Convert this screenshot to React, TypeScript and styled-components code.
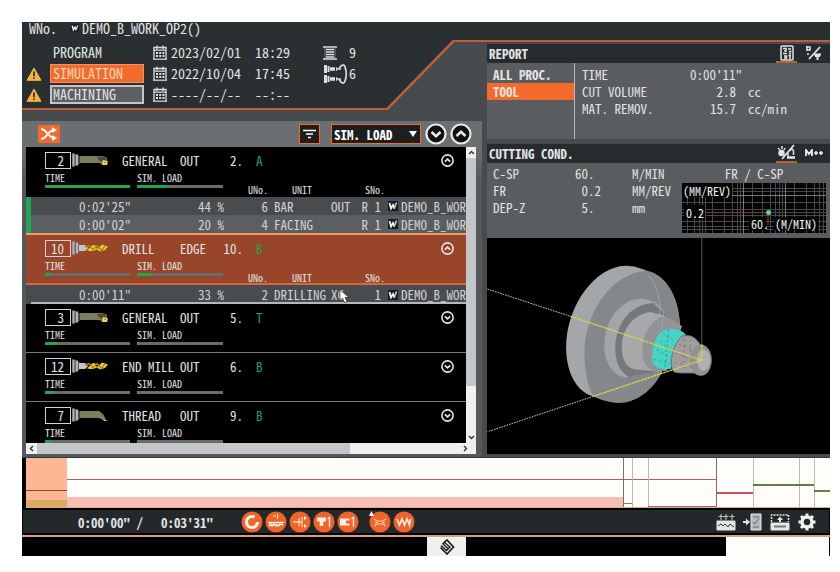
import React from "react";
import styled, { createGlobalStyle, css } from "styled-components";

const c = {
  orange: "#f26b2c",
  line: "#bf5c3a",
  dark: "#2a2f32",
  frame: "#474b4e",
  body: "#595d60",
  text: "#e2e3e3",
  green: "#22a455",
};

const Global = createGlobalStyle`
  * { box-sizing: border-box; }
  body { margin: 0; background: #fff; }
  body, button, select, input {
    font-family: "Noto Sans Mono CJK JP", "Liberation Mono", "Noto Sans CJK JP", monospace;
  }
  button { border: 0; padding: 0; background: none; color: inherit; }
  svg { display: block; }
`;

const Shell = styled.main`
  display: flex;
  flex-direction: column;
  height: calc(100vh - 38px);
  min-height: 534px;
  margin: 22px 10px 16px 22px;
  background: ${c.frame};
  color: ${c.text};
  font-size: 13px;
  line-height: 17px;
  white-space: pre;
`;

const Upper = styled.div`
  position: relative;
  flex: 1;
  min-height: 0;
  display: grid;
  grid-template-columns: 465fr 343fr;
  grid-template-rows: minmax(0, 1fr);
  isolation: isolate;
`;

const HeaderShape = styled.div<{ $edge?: boolean }>`
  position: absolute;
  z-index: -1;
  inset: 0 0 auto 0;
  height: ${(p) => (p.$edge ? 88 : 86)}px;
  background: ${(p) => (p.$edge ? c.line : c.dark)};
  clip-path: ${(p) =>
    p.$edge
      ? "polygon(0 0, 100% 0, 100% 20px, 53.5% 20px, 45.3% 88px, 0 88px)"
      : "polygon(0 0, 100% 0, 100% 18px, 53.3% 18px, 45.1% 86px, 0 86px)"};
`;

const Left = styled.section`
  display: flex;
  flex-direction: column;
  min-width: 0;
  min-height: 0;
`;

const Head = styled.header`
  display: flex;
  flex-direction: column;
  height: 99px;
  font-size: 14px;
`;

const Title = styled.h1`
  display: flex;
  align-items: center;
  gap: 14px;
  height: 11px;
  margin: 0;
  padding-left: 7px;
  font: inherit;
  line-height: 14px;
`;
const FileName = styled.span`
  display: flex;
  align-items: center;
  gap: 3px;
`;

const Stages = styled.div`
  display: grid;
  grid-template-columns: 24px 94px 9px 18px 84px 68px 26px 20px;
  grid-auto-rows: 21px;
  align-items: center;
  padding: 9px 0 0 4px;
`;

const Stage = styled.button<{ $tone?: "active" | "idle" }>`
  height: 19px;
  padding: 0 2px;
  text-align: left;
  font-size: 14px;
  line-height: 17px;
  border: 1px solid transparent;
  ${(p) => p.$tone === "active" && css`background: ${c.orange}; border-color: #f7925f; color: #ffd9b8;`}
  ${(p) => p.$tone === "idle" && css`background: #5b5f62; border-color: #c4c6c7; border-width: 2px; line-height: 15px; padding-left: 1px;`}
`;

const ListPanel = styled.div`
  flex: 1;
  min-height: 0;
  display: flex;
  flex-direction: column;
  margin-right: 5px;
  padding: 0 6px 3px 4px;
  background: linear-gradient(#6b6f72 0 26px, #54585b 60px);
`;

const Toolbar = styled.div`
  flex: none;
  display: flex;
  align-items: center;
  height: 26px;
  padding: 0 4px 0 12px;
`;
const Shuffle = styled.button`
  display: grid;
  place-items: center;
  width: 22px;
  height: 18px;
  margin-right: auto;
  background: ${c.orange};
`;
const FilterButton = styled.button`
  display: grid;
  place-items: center;
  width: 21px;
  height: 20px;
  margin-right: 11px;
  border: 1px solid ${c.orange};
  background: #1c1e1f;
`;
const SelectWrap = styled.label`
  position: relative;
  width: 90px;
  height: 20px;
  margin-right: 1px;
  svg { position: absolute; right: 4px; top: 7px; pointer-events: none; }
`;
const Select = styled.select`
  appearance: none;
  width: 100%;
  height: 100%;
  padding: 0 0 0 2px;
  border: 1px solid ${c.orange};
  border-radius: 0;
  background: #1c1e1f;
  color: #fff;
  font-size: 13px;
  font-weight: 700;
  line-height: 17px;
`;
const Round = styled.button`
  width: 22px;
  height: 22px;
  margin-left: 3px;
`;

const ScrollArea = styled.div`
  flex: 1;
  min-height: 0;
  display: grid;
  grid-template-columns: minmax(0, 1fr) 10px;
  grid-template-rows: minmax(0, 1fr) 11px;
`;

const List = styled.div`
  overflow: hidden;
  background: #000;
`;

const Group = styled.article<{ $selected?: boolean; $open?: boolean }>`
  display: grid;
  grid-template-columns: 85px 7px 86px 1fr;
  grid-template-rows: 22px 13px 1fr;
  height: ${(p) => (p.$selected ? 52 : p.$open ? 50 : 49)}px;
  padding: 2px 12px 0 19px;
  background: #000;
  border-bottom: ${(p) => (p.$open ? 0 : 1)}px solid #77797a;
  ${(p) => p.$selected && css`
    background: #98452a;
    border-top: 2px solid #f19a6c;
    border-bottom: 2px solid #cf6a45;
  `}
`;

const GroupHead = styled.div`
  grid-column: 1 / -1;
  display: grid;
  grid-template-columns: 26px 51px 58px 43px 20px 13px 20px 1fr 13px;
  align-items: center;
`;
const ToolNo = styled.span`
  height: 17px;
  padding-right: 6px;
  border: 1px solid #d3d4d4;
  text-align: right;
  line-height: 15px;
`;
const Turret = styled.span`
  grid-column: 7;
  color: ${c.green};
`;
const Toggle = styled.button`
  grid-column: 9;
  width: 13px;
  height: 13px;
`;
const Small = styled.span<{ $col: number }>`
  grid-column: ${(p) => p.$col};
  font-size: 10px;
  line-height: 13px;
`;
const Meter = styled.div<{ $col: number }>`
  grid-column: ${(p) => p.$col};
  grid-row: 3;
  height: 3px;
  margin-top: 1px;
  background: #6a6c6c;
`;
const Fill = styled.div`
  height: 100%;
  background: ${c.green};
`;
const Captions = styled.div`
  grid-column: 4;
  grid-row: 3;
  display: grid;
  grid-template-columns: 44px 73px 1fr;
  padding-left: 25px;
  font-size: 10px;
  line-height: 11px;
`;

const Unit = styled.div<{ $alt?: boolean; $marked?: boolean; $last?: boolean }>`
  position: relative;
  display: grid;
  grid-template-columns: 100px 93px 44px 6px 57px 25px 25px 7px 1fr;
  align-items: center;
  height: ${(p) => (p.$last ? 19 : 18)}px;
  border-left: 5px solid ${(p) => (p.$marked ? c.green : "transparent")};
  background: ${(p) => (p.$alt ? "#5b5f62" : "#484c4f")};
  box-shadow: ${(p) => (p.$last ? "inset 0 -2px #b5b7b8" : "none")};
  color: #d0d2d3;
`;
const Num = styled.span`
  text-align: right;
`;
const Pointer = styled.svg`
  position: absolute;
  left: 308px;
  top: 5px;
`;

const VScroll = styled.div`
  display: grid;
  grid-template-rows: 11px 231fr 46fr 11px;
  background: #efefef;
`;
const HScroll = styled.div`
  grid-column: 1 / -1;
  display: grid;
  grid-template-columns: 11px 314fr 104fr 22px;
  background: #efefef;
`;
const Thumb = styled.div`
  background: #c3c7c9;
`;
const Step = styled.button`
  display: grid;
  place-items: center;
`;

const Right = styled.section`
  display: flex;
  flex-direction: column;
  min-width: 0;
  min-height: 0;
  padding: 22px 0 3px;
`;
const PanelHead = styled.header`
  flex: none;
  display: flex;
  align-items: center;
  height: 19px;
  padding-left: 2px;
  background: #262b2e;
  h2 { flex: 1; margin: 0; font-size: 13px; line-height: 17px; }
`;
const Tab = styled.button<{ $active?: boolean }>`
  display: grid;
  place-items: center;
  width: 21px;
  height: 19px;
  margin-right: 6px;
  border-bottom: 2px solid ${(p) => (p.$active ? c.line : "transparent")};
`;
const Report = styled.div`
  flex: none;
  display: grid;
  grid-template-columns: 88px 1fr;
  height: 76px;
  margin-bottom: 5px;
  background: ${c.body};
`;
const Scope = styled.nav`
  display: flex;
  flex-direction: column;
  padding-top: 3px;
  border-right: 1px solid #b9bbbc;
`;
const ScopeButton = styled.button<{ $active?: boolean }>`
  height: 17px;
  padding-left: 6px;
  text-align: left;
  font-size: 13px;
  font-weight: 700;
  line-height: 17px;
  background: ${(p) => (p.$active ? c.orange : "transparent")};
`;
const Data = styled.table<{ $cols: number[] }>`
  border-collapse: collapse;
  table-layout: fixed;
  align-self: start;
  margin-top: 2px;
  width: ${(p) => p.$cols.reduce((a, b) => a + b, 0)}px;
  td, th { height: 17px; padding: 0; font-weight: 400; text-align: left; }
  ${(p) => p.$cols.map((w, i) => `tr > :nth-child(${i + 1}) { width: ${w}px; }`).join("")}
`;
const ReportData = styled(Data)`
  margin: 3px 0 0 7px;
  td:nth-child(2) { text-align: right; }
  tr + tr td:nth-child(2) { padding-right: 6px; }
  td:nth-child(3) { padding-left: 6px; }
`;
const Cutting = styled.div`
  flex: none;
  display: flex;
  justify-content: space-between;
  height: 75px;
  padding: 0 4px 0 6px;
  background: ${c.body};
`;
const Graph = styled.figure`
  display: flex;
  flex-direction: column;
  width: 144px;
  margin: 2px 0 0;
  figcaption { height: 18px; text-align: center; }
`;
const Plot = styled.div`
  position: relative;
  height: 50px;
  background: #050505;
  svg { position: absolute; inset: 0; }
`;
const PlotLabel = styled.span<{ $x: number; $y: number }>`
  position: absolute;
  left: ${(p) => p.$x}px;
  top: ${(p) => p.$y}px;
  color: #f2f2f2;
  font-size: 12px;
  line-height: 15px;
`;
const Viewer = styled.div`
  flex: 1;
  min-height: 0;
  background: #000;
  svg { width: 100%; height: 100%; }
`;

const Timeline = styled.div`
  flex: none;
  height: 51px;
  padding-left: 4px;
  background: #000;
  border-top: 1px solid #33383b;
  svg { width: 100%; height: 50px; background: #fefdf9; }
`;
const Status = styled.footer`
  flex: none;
  display: flex;
  align-items: center;
  height: 27px;
  padding: 0 12px 0 55px;
  background: #23282b;
  border: solid #000;
  border-width: 2px 1px 1px;
  box-shadow: inset 0 -1px #000;
  font-weight: 700;
`;
const Clock = styled.span`
  display: flex;
  width: 163px;
`;
const Elapsed = styled.span`
  width: 83px;
`;
const Badge = styled.button<{ $gap?: boolean }>`
  width: 22px;
  height: 22px;
  margin-left: ${(p) => (p.$gap ? 8 : 0)}px;
  margin-right: 2px;
`;
const Tools = styled.div`
  display: flex;
  gap: 7px;
  margin-left: auto;
  button { width: 20px; height: 20px; }
`;
const Bottom = styled.div`
  flex: none;
  display: grid;
  grid-template-columns: 405fr 39px 260fr 103fr 1px;
  height: 21px;
  border-top: 2px solid #e29a84;
  background: #000;
`;
const Reset = styled.button`
  display: grid;
  place-items: center;
  background: #efefef;
`;
const Blank = styled.div`
  grid-column: 4;
  background: #fefdf9;
`;

const Warn = () => (
  <svg width="16" height="14" viewBox="0 0 16 14" aria-hidden="true">
    <path d="M8 1L15 13.3H1Z" fill="#f0b63c" stroke="#f0b63c" strokeLinejoin="round" />
    <path d="M8 4.5V9.2M8 10.4V12" stroke="#2b2513" strokeWidth="1.7" />
  </svg>
);
const Calendar = () => (
  <svg width="14" height="15" viewBox="0 0 14 15" fill="none" stroke="#dddfdf" aria-hidden="true">
    <path d="M1 14V2.5H13V14M1 5.2H13M4 .5V4M10 .5V4" strokeWidth="1.3" />
    <path d="M0 14.200H14" strokeWidth="1.2" />
    <path d="M3 8H11.5M3 11H11.5" strokeWidth="2" strokeDasharray="2 1.2" />
  </svg>
);
const ProgramIcon = () => (
  <svg width="14" height="14" viewBox="0 0 14 14" stroke="#dddfdf" aria-hidden="true">
    <path d="M0 1H14M0 13H14M3 3.500H11M3 6H11M3 8.500H11M3 11H11" strokeWidth="1.500" />
    <path d="M2 1V13M12 1V13" strokeWidth=".6" opacity=".7" />
  </svg>
);
const ToolsIcon = () => (
  <svg width="25" height="20" viewBox="0 0 25 20" fill="none" stroke="#dddfdf" aria-hidden="true">
    <path d="M2.500 1V9M2.500 11V19" strokeWidth="3" />
    <path d="M5.500 2V8M5.500 12V18" strokeWidth="2" />
    <path d="M7 5H14M7 15H14" strokeWidth="3.500" strokeDasharray="5 1" />
    <path d="M14 5H18M14 15H18" strokeWidth="1.500" />
    <path d="M16 4.500L18.500 1.500Q21 0 22 3Q24.500 10 22 17Q21 20 18.500 18.500L16 15.500" strokeWidth="1.700" />
  </svg>
);
const FileMark = ({ size = 10 }: { size?: number }) => (
  <svg width={size} height={size} viewBox="0 0 10 10" aria-hidden="true">
    <path d="M0 0H10V10H0Z" fill="#0f1c33" />
    <path d="M1.500 2L3 7.500L5 4L6.500 7.500" stroke="#f4f4ef" strokeWidth="1.800" fill="none" />
    <path d="M6 8L8.500 1.500" stroke="#d8d36a" strokeWidth="1.700" />
  </svg>
);
const Chevron = ({ up, heavy }: { up?: boolean; heavy?: boolean }) => (
  <svg width="100%" height="100%" viewBox="0 0 22 22" fill="none" stroke="#e9e9e9" aria-hidden="true">
    <circle cx="11" cy="11" r="9.500" strokeWidth={heavy ? 2.2 : 2.6} fill={heavy ? "#111" : "none"} />
    <path d={up ? "M6.500 13L11 8.800L15.500 13" : "M6.500 9L11 13.200L15.500 9"} strokeWidth={heavy ? 2.6 : 3} />
  </svg>
);
const Arrow = ({ d }: { d: string }) => (
  <svg width="7" height="7" viewBox="0 0 7 7" fill="none" stroke="#333" strokeWidth="1.4" aria-hidden="true"><path d={d} /></svg>
);

const ToolArt = ({ kind }: { kind: string }) => (
  <svg width="38" height="16" viewBox="0 0 38 16" aria-hidden="true">
    <path d="M2.500 1.500V14.500M6 2.500V13.500" stroke="#b3b6b9" strokeWidth="2.400" />
    <path d="M4.300 2V14M8 4V12" stroke="#6d7174" strokeWidth="1.200" />
    {kind === "turn" && (
      <g>
        <path d="M9 4H32L36 6V9L34 12H31L28 11H9Z" fill="#7d7b60" />
        <path d="M26 5L33 4.500L36 8L29 9.500Z" fill="#4b493a" />
        <path d="M32 8L37 9.500L36 13H31Z" fill="#e8dc48" />
        <path d="M33.500 10.500H35" stroke="#6d681f" />
      </g>
    )}
    {kind === "drill" && (
      <g>
        <path d="M8 5H14L17 8L14 11H8Z" fill="#c4c7ca" />
        <path d="M13 8L16 10.500L21 5.500L24 5L26 9L31 4.500L37 6.500L34 10L29 11.500L26 9.500L22 11L18 11Z" fill="#e8cb32" />
        <path d="M14 7L18 5.500L22 10L26 5.500L31 10.500L34 5.500" stroke="#a98518" strokeWidth="1.400" fill="none" />
      </g>
    )}
    {kind === "thread" && (
      <g>
        <path d="M9 4H28L32 7L35 12.500L32 13L28 11H9Z" fill="#7d7b60" />
        <path d="M32 12L37 14H33Z" fill="#c5c5b7" />
      </g>
    )}
  </svg>
);

type UnitData = { time: string; load: string; no: string; name: string; part: string; sno: string; marked?: boolean; cursor?: boolean };
type GroupData = { no: number; art: string; name: string; part: string; seq: string; turret: string; time: number; load: number; units?: UnitData[]; selected?: boolean };

const groups: GroupData[] = [
  { no: 2, art: "turn", name: "GENERAL", part: "OUT", seq: "2.", turret: "A", time: 100, load: 35, units: [
    { time: "0:02'25\"", load: "44 %", no: "6", name: "BAR", part: "OUT", sno: "R 1", marked: true },
    { time: "0:00'02\"", load: "20 %", no: "4", name: "FACING", part: "", sno: "R 1", marked: true },
  ] },
  { no: 10, art: "drill", name: "DRILL", part: "EDGE", seq: "10.", turret: "B", time: 7, load: 17, selected: true, units: [
    { time: "0:00'11\"", load: "33 %", no: "2", name: "DRILLING", part: "XC", sno: "1", cursor: true },
  ] },
  { no: 3, art: "turn", name: "GENERAL", part: "OUT", seq: "5.", turret: "T", time: 14, load: 2 },
  { no: 12, art: "drill", name: "END MILL", part: "OUT", seq: "6.", turret: "B", time: 11, load: 2 },
  { no: 7, art: "thread", name: "THREAD", part: "OUT", seq: "9.", turret: "B", time: 7, load: 1 },
];

const stages: { label: string; tone?: "active" | "idle"; date: string; time: string; icon?: React.ReactNode; count: string }[] = [
  { label: "PROGRAM", date: "2023/02/01", time: "18:29", icon: <ProgramIcon />, count: "9" },
  { label: "SIMULATION", tone: "active", date: "2022/10/04", time: "17:45", icon: <ToolsIcon />, count: "6" },
  { label: "MACHINING", tone: "idle", date: "----/--/--", time: "--:--", count: "" },
];

const ToolGroup = ({ g }: { g: GroupData }) => (
  <>
    <Group $selected={g.selected} $open={!!g.units}>
      <GroupHead>
        <ToolNo>{g.no}</ToolNo>
        <ToolArt kind={g.art} />
        <span>{g.name}</span>
        <span>{g.part}</span>
        <Num>{g.seq}</Num>
        <Turret>{g.turret}</Turret>
        <Toggle aria-label={g.units ? "Collapse" : "Expand"}><Chevron up={!!g.units} /></Toggle>
      </GroupHead>
      <Small $col={1}>TIME</Small>
      <Small $col={3}>SIM. LOAD</Small>
      <Meter $col={1}><Fill style={{ width: `${g.time}%` }} /></Meter>
      <Meter $col={3}><Fill style={{ width: `${g.load}%` }} /></Meter>
      {g.units && <Captions><span>UNo.</span><span>UNIT</span><span>SNo.</span></Captions>}
    </Group>
    {g.units?.map((u, i) => (
      <Unit key={u.time} $alt={i % 2 === 1} $marked={u.marked} $last={g.selected}>
        <Num>{u.time}</Num>
        <Num>{u.load}</Num>
        <Num>{u.no}</Num>
        <span />
        <span>{u.name}</span>
        <span>{u.part}</span>
        <Num>{u.sno}</Num>
        <span />
        <FileName><FileMark />DEMO_B_WOR</FileName>
        {u.cursor && (
          <Pointer width="11" height="14" viewBox="0 0 11 14" aria-hidden="true">
            <path d="M1 0V10L3.500 8L5.500 12.500L8 11.500L6 7.500L9.500 7Z" fill="#fff" stroke="#222" strokeWidth=".6" />
          </Pointer>
        )}
      </Unit>
    ))}
  </>
);

const ReportIcon = () => (
  <svg width="14" height="16" viewBox="0 0 14 16" fill="none" stroke="#e4e4e4" strokeWidth="1.5" aria-hidden="true">
    <rect x="1" y="1" width="12" height="14" rx="1" />
    <path d="M3 3.500H6V6H4M8 4H11M9 6.500H11.500M3 8.500H7M9 8.500H11M4 11H6.500V13H4M8.500 10.500H11M10 11V14" />
  </svg>
);
const SplitIcon = () => (
  <svg width="17" height="16" viewBox="0 0 17 16" fill="none" stroke="#e4e4e4" strokeWidth="1.5" aria-hidden="true">
    <path d="M2 1V6M1 2H5V5H2M3 8V10" />
    <path d="M4 14L15 2" strokeWidth="1.800" />
    <path d="M9 9.500H16M10 11H15M12.500 11V15" strokeWidth="2" />
  </svg>
);
const CutIcon = () => (
  <svg width="19" height="17" viewBox="0 0 19 17" fill="none" stroke="#e4e4e4" strokeWidth="1.5" aria-hidden="true">
    <path d="M5 15L17 1" strokeWidth="1.800" />
    <circle cx="4.500" cy="9" r="2.500" fill="#e4e4e4" />
    <path d="M1 4L3 6M5 2V5M8 4L7 6M13 7Q15 3 16.500 7V11M11 9V13" />
    <path d="M10 13.500H18" strokeWidth="2.500" />
  </svg>
);
const MacroIcon = () => (
  <svg width="18" height="8" viewBox="0 0 18 8" fill="none" stroke="#f0f0f0" strokeWidth="1.800" aria-hidden="true">
    <path d="M1 7V1L4 5L7 1V7" />
    <path d="M9 4H13M11 2V6M14 4H18M16 2V6" strokeWidth="1.500" />
  </svg>
);

const gridX = [5, 12, 17, 20, 23, 30, 42, 50, 55, 58, 61, 70, 80, 88, 93, 97, 100, 103, 112, 124, 132, 137, 141];
const gridY = [5, 8, 12, 19, 26, 29, 32, 38, 43, 46];

const badges = [
  <g key="0"><circle cx="11" cy="11" r="5.500" strokeWidth="3.200" strokeDasharray="28 6" /><path d="M6.500 9L10 4.500" strokeWidth="1" /></g>,
  <g key="1"><path d="M8 5H11M12.500 3V8" strokeWidth="1.200" opacity=".8" /><path d="M3 11.500H19" strokeWidth="1.400" /><path d="M4 15L5.500 13L7 15L9 13L11 15L12.500 13M13 15.500L15 13L18 14" strokeWidth="1.700" /></g>,
  <g key="2"><path d="M4 11H10M10 7V15M13 6V16M10 11H13" strokeWidth="1.300" opacity=".8" /><path d="M15 5L18 7L15 9ZM15 13L18 15L15 17Z" fill="#fff0e6" stroke="none" /></g>,
  <g key="3"><path d="M4 8.500H13" strokeWidth="4" /><path d="M8.500 10V15" strokeWidth="3.500" /><path d="M14.500 8L16.500 6.500V16" strokeWidth="1.400" /></g>,
  <g key="4"><path d="M3 11H9" strokeWidth="7" /><path d="M9 8.500H12.500M9 13.500H12.500" strokeWidth="2" /><path d="M14.500 8L16.500 6.500V16" strokeWidth="1.400" /></g>,
  <g key="5" strokeWidth="1.200" opacity=".75"><path d="M5 8L8 10H14L17 8M5 15L8 13H14L17 15M6 11.500H9M13 11.500H16" /></g>,
  <g key="6"><path d="M4 8L6.500 14L9 8L11.500 14L14 8L16.500 14L17.500 8" strokeWidth="1.700" /></g>,
];
const badgeLabels = ["Spindle", "Coolant", "Chuck", "Upper turret", "Lower turret", "Warm-up", "Vibration"];

export default function App() {
  return (
    <>
      <Global />
      <Shell>
        <Upper>
          <HeaderShape $edge />
          <HeaderShape />
          <Left>
            <Head>
              <Title><span>WNo.</span><FileName><FileMark size={8} />DEMO_B_WORK_OP2()</FileName></Title>
              <Stages>
                {stages.map((s) => (
                  <React.Fragment key={s.label}>
                    {s.tone ? <Warn /> : <span />}
                    <Stage $tone={s.tone}>{s.label}</Stage>
                    <span />
                    <Calendar />
                    <span>{s.date}</span>
                    <span>{s.time}</span>
                    {s.icon ?? <span />}
                    <span>{s.count}</span>
                  </React.Fragment>
                ))}
              </Stages>
            </Head>
            <ListPanel>
              <Toolbar>
                <Shuffle aria-label="Shuffle">
                  <svg width="18" height="14" viewBox="0 0 18 14" fill="none" stroke="#fff" strokeWidth="2" aria-hidden="true">
                    <path d="M1 2C7 2 8 11 14 11M1 12C7 12 8 3 14 3" />
                    <path d="M12 0L17 3L12 6ZM12 8L17 11L12 14Z" fill="#fff" stroke="none" />
                  </svg>
                </Shuffle>
                <FilterButton aria-label="Filter">
                  <svg width="13" height="10" viewBox="0 0 13 10" stroke="#fff" strokeWidth="1.600" aria-hidden="true">
                    <path d="M0 1.500H13M3 5H10M5 8.500H8" />
                  </svg>
                </FilterButton>
                <SelectWrap>
                  <Select aria-label="List value"><option>SIM. LOAD</option></Select>
                  <svg width="8" height="6" viewBox="0 0 8 6" aria-hidden="true"><path d="M0 0H8L4 6Z" fill="#fff" /></svg>
                </SelectWrap>
                <Round aria-label="Next"><Chevron heavy /></Round>
                <Round aria-label="Previous"><Chevron heavy up /></Round>
              </Toolbar>
              <ScrollArea>
                <List>{groups.map((g) => <ToolGroup key={g.no} g={g} />)}</List>
                <VScroll>
                  <Step aria-label="Scroll up"><Arrow d="M1 5L3.500 2.500L6 5" /></Step>
                  <Thumb />
                  <span />
                  <Step aria-label="Scroll down"><Arrow d="M1 2L3.500 4.500L6 2" /></Step>
                </VScroll>
                <HScroll>
                  <Step aria-label="Scroll left"><Arrow d="M5 1L2.500 3.500L5 6" /></Step>
                  <Thumb />
                  <span />
                  <Step aria-label="Scroll right"><Arrow d="M2 1L4.500 3.500L2 6" /></Step>
                </HScroll>
              </ScrollArea>
            </ListPanel>
          </Left>

          <Right>
            <PanelHead>
              <h2>REPORT</h2>
              <Tab $active aria-label="Report"><ReportIcon /></Tab>
              <Tab aria-label="Tool split"><SplitIcon /></Tab>
            </PanelHead>
            <Report>
              <Scope>
                <ScopeButton>ALL PROC.</ScopeButton>
                <ScopeButton $active>TOOL</ScopeButton>
              </Scope>
              <ReportData $cols={[100, 60, 90]}>
                <tbody>
                  <tr><th scope="row">TIME</th><td>0:00'11"</td><td /></tr>
                  <tr><th scope="row">CUT VOLUME</th><td>2.8</td><td>cc</td></tr>
                  <tr><th scope="row">MAT. REMOV.</th><td>15.7</td><td>cc/min</td></tr>
                </tbody>
              </ReportData>
            </Report>
            <PanelHead>
              <h2>CUTTING COND.</h2>
              <Tab $active aria-label="Cutting conditions"><CutIcon /></Tab>
              <Tab aria-label="M codes"><MacroIcon /></Tab>
            </PanelHead>
            <Cutting>
              <Data $cols={[82, 57, 46]}>
                <tbody>
                  <tr><th scope="row">C-SP</th><td>60.</td><td>M/MIN</td></tr>
                  <tr><th scope="row">FR</th><td>{" 0.2"}</td><td>MM/REV</td></tr>
                  <tr><th scope="row">DEP-Z</th><td>{" 5."}</td><td>mm</td></tr>
                </tbody>
              </Data>
              <Graph>
                <figcaption>FR / C-SP</figcaption>
                <Plot>
                  <svg width="144" height="50" viewBox="0 0 144 50" aria-hidden="true">
                    <g stroke="#47484a" strokeWidth="1">
                      {gridX.map((x) => <path key={x} d={`M${x}.5 0V50`} />)}
                      {gridY.map((y) => <path key={y} d={`M0 ${y}.5H144`} />)}
                    </g>
                    <path d="M0 12.500H144M61.500 0V50M103.500 0V50" stroke="#77797a" />
                    <path d="M24 29.500H86V42" stroke="#7b3e2c" fill="none" />
                    <path d="M0 0H50V14H0ZM2 22H23V36H2ZM67 34H84V47H67ZM92 34H136V47H92Z" fill="#050505" />
                    <circle cx="86.500" cy="29.500" r="2.500" fill="#63d08b" />
                  </svg>
                  <PlotLabel $x={1} $y={0}>(MM/REV)</PlotLabel>
                  <PlotLabel $x={4} $y={22}>0.2</PlotLabel>
                  <PlotLabel $x={69} $y={33}>60. (M/MIN)</PlotLabel>
                </Plot>
              </Graph>
            </Cutting>
            <Viewer>
              <svg viewBox="0 0 343 217" preserveAspectRatio="xMidYMid meet" role="img" aria-label="Workpiece model">
                <g transform="translate(-7 -3) scale(.33333)">
                  <path d="M666 8V340" stroke="#55574f" strokeWidth="3" />
                  <path d="M435 93C350 95 258 205 257 340C258 430 300 478 340 487C370 500 400 507 425 505C480 500 520 460 545 415L600 270C597 190 560 120 500 108C470 95 450 93 435 93Z" fill="#a4a7a9" />
                  <path d="M498 108C400 113 312 230 312 355C314 430 330 480 345 489C375 502 400 507 425 505C480 500 520 460 545 415L600 275C597 190 560 120 498 108Z" fill="#85888b" />
                  <path d="M478 192C420 195 372 260 372 330C372 390 400 425 440 430L500 400L560 250L530 208C510 195 495 192 478 192Z" fill="#a3a6a8" />
                  <path d="M520 205C450 208 405 270 405 340C405 385 420 412 445 428L520 412L565 250Z" fill="#76797b" />
                  <path d="M512 232C455 238 422 290 425 345C427 380 440 400 465 405L545 412L606 275L550 242Z" fill="#a6a8aa" />
                  <path d="M606 275L550 245C505 260 485 310 487 355C489 385 500 402 520 410L560 410Z" fill="#919396" />
                  <path d="M505 120Q545 165 540 245M525 200L552 230L545 275" stroke="#aeb1b2" strokeWidth="2" fill="none" />
                  <path d="M550 288C575 280 600 280 618 300C590 315 575 350 574 403C555 408 530 400 520 390C510 360 525 300 550 288Z" fill="#47d3c6" />
                  <path d="M548 295L585 320M540 320L575 350M530 345L572 370M522 375L570 388M566 285L555 400" stroke="#2b8582" strokeWidth="2" strokeDasharray="8 7" fill="none" />
                  <path d="M605 305C635 298 650 312 662 332L662 418C630 412 600 420 582 412C568 395 572 340 605 305Z" fill="#a09da1" stroke="#727377" strokeWidth="3" />
                  <path d="M598 330L650 350M588 355L640 380M585 385L635 395M612 315V405M632 315V400" stroke="#7a7277" strokeWidth="3" strokeDasharray="6 10" />
                  <ellipse cx="663" cy="377" rx="33" ry="47" fill="#919294" />
                  <ellipse cx="671" cy="377" rx="20" ry="32" fill="#b0b1b0" />
                  <path d="M20 163L270 245M340 486L20 593" stroke="#d3cd8d" strokeWidth="3" strokeDasharray="5 3" />
                  <path d="M270 245L665 377L340 486M666 330V377" stroke="#ddd34c" strokeWidth="4" strokeDasharray="8 2" fill="none" />
                </g>
              </svg>
            </Viewer>
          </Right>
        </Upper>

        <Timeline>
          <svg viewBox="0 0 804 50" preserveAspectRatio="none" role="img" aria-label="Process timeline">
            <path d="M0 0H41V50H0Z" fill="#fdb795" />
            <path d="M0 42H41V50H0Z" fill="#dcab62" />
            <path d="M0 32.500H41" stroke="#6b5631" />
            <path d="M41 39H597V50H41Z" fill="#f5bfb3" />
            <path d="M41 21.500H690" stroke="#b4605a" />
            <path d="M597.500 0V50M690.500 0V50" stroke="#77706f" />
            <path d="M606.500 0V50M622.500 0V50M727.500 0V50M773.500 0V50M788.500 0V50" stroke="#b9b6b4" />
            <path d="M597 45.500H606M622 48.500H690" stroke="#8d7470" />
            <path d="M691 35H727" stroke="#cf4e57" strokeWidth="2" />
            <path d="M727 27H788M788 33H804" stroke="#5e8046" strokeWidth="2" />
            <path d="M0 49.500H804" stroke="#e6a596" />
          </svg>
        </Timeline>
        <Status>
          <Clock><Elapsed>0:00'00" /</Elapsed><span>0:03'31"</span></Clock>
          {badges.map((b, i) => (
            <Badge key={i} $gap={i === 5} aria-label={badgeLabels[i]}>
              <svg width="22" height="22" viewBox="0 0 22 22" fill="none" stroke="#fff0e6" aria-hidden="true">
                <circle cx="11" cy="11" r="10.500" fill="#ee6429" stroke="none" />
                {b}
                {i === 5 && <path d="M0 5L2.500 0L5 5Z" fill="#fff" stroke="none" />}
              </svg>
            </Badge>
          ))}
          <Tools>
            <button aria-label="Load chart">
              <svg width="20" height="20" viewBox="0 0 20 20" fill="none" stroke="#e6e6e6" aria-hidden="true">
                <path d="M1 9H19V18H1Z" fill="#e6e6e6" />
                <path d="M5 2V8M2.500 4.500H7.500M10 2V8M7.500 4.500H12.500M16 2V8M13.500 4.500H18.500" strokeWidth="1.100" opacity=".8" />
                <path d="M2 14L5 12L7 14L9 12L12 15L14 12L18 15" stroke="#333" />
              </svg>
            </button>
            <button aria-label="Transfer">
              <svg width="20" height="20" viewBox="0 0 20 20" fill="none" stroke="#e6e6e6" aria-hidden="true">
                <path d="M0 10H4" strokeWidth="2" /><path d="M3 6.500L7 10L3 13.500Z" fill="#e6e6e6" stroke="none" />
                <path d="M8 2H18V18H8Z" fill="#b8babb" />
                <path d="M10 5H16M10 10L12 12L16 6M10 15H16" stroke="#666" />
              </svg>
            </button>
            <button aria-label="Upload">
              <svg width="20" height="20" viewBox="0 0 20 20" fill="none" stroke="#e6e6e6" aria-hidden="true">
                <path d="M1.500 10V3H18.500V10" strokeWidth="1.500" strokeDasharray="2 1" />
                <path d="M1 11H19V18H1Z" fill="#e6e6e6" /><path d="M4 14.500H16" stroke="#777" strokeWidth="2" />
                <path d="M10 10V6" strokeWidth="2" /><path d="M7 8L10 4.500L13 8Z" fill="#e6e6e6" stroke="none" />
              </svg>
            </button>
            <button aria-label="Settings">
              <svg width="20" height="20" viewBox="0 0 20 20" fill="none" stroke="#f2f2f2" aria-hidden="true">
                <circle cx="10" cy="10" r="5" strokeWidth="3.500" />
                <path d="M10 1.500V5M10 15V18.500M1.500 10H5M15 10H18.500M4 4L6.500 6.500M13.500 13.500L16 16M4 16L6.500 13.500M13.500 6.500L16 4" strokeWidth="3" />
              </svg>
            </button>
          </Tools>
        </Status>
        <Bottom>
          <span />
          <Reset aria-label="Reset">
            <svg width="16" height="16" viewBox="0 0 16 16" fill="none" stroke="#151515" strokeWidth="1.600" aria-hidden="true">
              <path d="M3.500 5L8 1L14.500 8L8 15L1.500 8.500" />
              <path d="M2 6.500L7.500 11.500L11 8L5.500 3.500M4 5L9 9.500" strokeWidth="1.300" />
            </svg>
          </Reset>
          <Blank />
        </Bottom>
      </Shell>
    </>
  );
}
